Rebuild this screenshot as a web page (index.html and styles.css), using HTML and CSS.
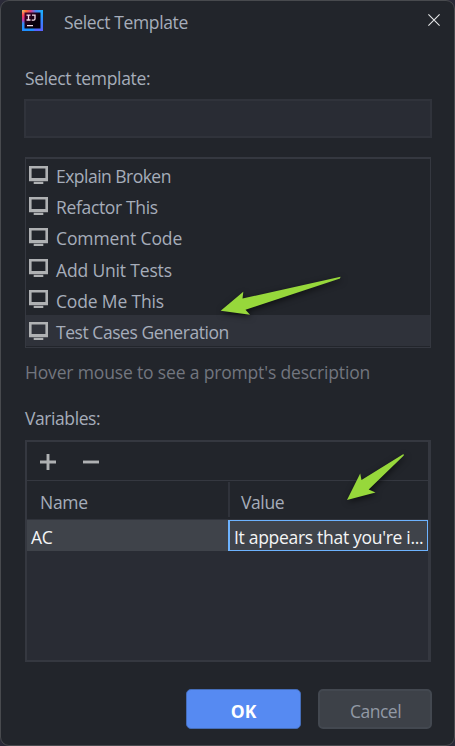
FILE: index.html
```html
<!DOCTYPE html>
<html lang="en">
<head>
<meta charset="utf-8">
<title>Select Template</title>
<link rel="stylesheet" href="styles.css">
</head>
<body>
<svg class="defs" width="0" height="0" aria-hidden="true">
  <symbol id="monitor" viewBox="0 0 19 18">
    <path fill="#afb1b3" fill-rule="evenodd" d="M0 0h19v15.200H0zM2.600 2.600v9.400h13.800V2.600z"/>
    <path fill="#afb1b3" d="M4.700 15.800h9.600V18H4.700z"/>
  </symbol>
</svg>
<main class="dialog">
  <header class="titlebar">
    <svg class="logo" viewBox="0 0 21 21">
      <defs>
        <linearGradient id="top" x1="0" y1="0" x2="1" y2="0">
          <stop offset="0" stop-color="#ffc060"/><stop offset=".2" stop-color="#ff6a30"/>
          <stop offset=".42" stop-color="#d0408a"/><stop offset=".65" stop-color="#4a80f0"/><stop offset="1" stop-color="#18b4ff"/>
        </linearGradient>
        <linearGradient id="left" x1="0" y1="0" x2="0" y2="1">
          <stop offset="0" stop-color="#ffc060"/><stop offset=".25" stop-color="#ff4050"/>
          <stop offset=".48" stop-color="#c03aa8"/><stop offset=".65" stop-color="#2f8bf5"/><stop offset="1" stop-color="#1e90ff"/>
        </linearGradient>
        <linearGradient id="side" x1="0" y1="0" x2="0" y2="1">
          <stop offset="0" stop-color="#18b4ff"/><stop offset=".6" stop-color="#3a80ff"/><stop offset="1" stop-color="#5a62ff"/>
        </linearGradient>
        <linearGradient id="k" x1="0" y1="0" x2="1" y2="1">
          <stop offset="0" stop-color="#4a0030"/><stop offset=".6" stop-color="#08000c"/>
        </linearGradient>
      </defs>
      <path fill="url(#side)" d="M0 0h21v21H0z"/>
      <path fill="url(#top)" d="M0 0h21l-3 3H3z"/>
      <path fill="url(#left)" d="M0 0l3 3v15l-3 3z"/>
      <path fill="#1e90ff" d="M0 21l3-3h9v3z"/>
      <path fill="url(#k)" d="M2.500 2.500h16v16h-16z"/>
      <path fill="none" stroke="#f3dcea" stroke-width="1.300" d="M4.500 5.100h4M6.500 5v5M4.500 10h4M10 5.100h3v3.700q0 1.300-1.300 1.300H9.700M5 15.700h6"/>
    </svg>
    <h1 class="title">Select Template</h1>
    <svg class="close" viewBox="0 0 12 12"><path d="M.4.400l11.200 11.200M11.600.400L.4 11.600"/></svg>
  </header>
  <label class="label search-label" for="q">Select template:</label>
  <input class="search" id="q">
  <ul class="list">
    <li><svg class="mon"><use href="#monitor"/></svg><span class="t1">Explain Broken</span></li>
    <li><svg class="mon"><use href="#monitor"/></svg><span class="t2">Refactor This</span></li>
    <li><svg class="mon"><use href="#monitor"/></svg><span class="t3">Comment Code</span></li>
    <li><svg class="mon"><use href="#monitor"/></svg><span class="t4">Add Unit Tests</span></li>
    <li><svg class="mon"><use href="#monitor"/></svg><span class="t5">Code Me This</span></li>
    <li class="selected"><svg class="mon"><use href="#monitor"/></svg><span class="t6">Test Cases Generation</span></li>
  </ul>
  <p class="hint">Hover mouse to see a prompt's description</p>
  <div class="label vars-label">Variables:</div>
  <section class="panel">
    <div class="tools">
      <svg viewBox="0 0 16 16"><path d="M0 8h16M8 0v16"/></svg>
      <svg viewBox="0 0 16 16"><path d="M0 8h16"/></svg>
    </div>
    <div class="head"><div class="name">Name</div><div class="value">Value</div></div>
    <div class="row"><div class="cell">AC</div><div class="cell active">It appears that you're i...</div></div>
  </section>
  <footer class="actions"><button class="ok">OK</button><button class="cancel">Cancel</button></footer>
  <svg class="arrows" viewBox="0 0 455 746">
    <path d="M340.500 276.800L242.500 298.600l.800-6.800-22.600 19 29.300 4-4.500-5L340 278.600z"/>
    <path d="M403.500 454L361.500 480l-1.300-6.500L347 500l28.500-7.500-6.800-3L403.800 455.500z"/>
  </svg>
</main>
</body>
</html>
```
FILE: styles.css
```css
* { box-sizing: border-box; margin: 0; padding: 0; }
html { background: #2a2a38; }
body, input, button { font: 17.500px/24px "Open Sans", "Noto Sans", sans-serif; color: #a6adba; }
.defs { position: absolute; }
.dialog { width: 455px; height: 746px; border: 1px solid #484a4e; border-radius: 9px; background: #22252b; padding: 0 22px 0 23px; display: flex; flex-direction: column; position: relative; overflow: hidden; white-space: nowrap; }
.titlebar { height: 65px; display: flex; align-items: flex-start; margin: 0 -9px 0 -2px; }
.logo { width: 21px; height: 21px; margin-top: 9px; }
.title { font-size: inherit; font-weight: 400; margin: 9px 0 0 21px; flex: 1; letter-spacing: -.37px; }
.close { width: 12px; height: 12px; margin-top: 13px; margin-right: 1px; fill: none; stroke: #e5e7e8; stroke-width: 1.100; }
.label { padding-left: 1px; letter-spacing: -.34px; }
.search-label { height: 33px; }
.search { width: 408px; height: 39px; border: 2px solid #30333b; background: #292c34; outline: none; padding: 0 8px; }
.list { list-style: none; width: 406px; height: 191px; margin: 19px 0 0 1px; border: 1px solid #353840; border-top-width: 2px; }
.list li { height: 31.200px; display: flex; align-items: flex-start; padding: 5px 0 0 3px; letter-spacing: -.3px; }
.list span { margin-left: 8px; }
.list .t1 { letter-spacing: -.52px; }
.list .t2 { letter-spacing: -.34px; }
.list .t3 { letter-spacing: -.1px; }
.list .t4 { letter-spacing: -.16px; }
.list .t5 { letter-spacing: -.16px; }
.list .t6 { letter-spacing: -.45px; }
.mon { width: 19px; height: 18px; margin-top: 1.600px; }
.selected { background: #2f323a; }
.hint { color: #72767f; margin: 12px 0 0 1px; letter-spacing: -.16px; }
.vars-label { margin-top: 22px; height: 34px; letter-spacing: -.42px; }
.panel { width: 406px; height: 222px; margin-left: 1px; border: 2px solid #353840; border-right-width: 3px; background: #292c34; }
.tools { height: 39px; background: #22252b; border-bottom: 1px solid #353840; display: flex; gap: 27px; padding: 11.500px 0 0 13.400px; }
.tools svg { width: 16px; height: 16px; stroke: #afb1b3; stroke-width: 2.900; }
.head { height: 39px; background: #22252b; border-bottom: 1px solid #30333b; display: flex; padding-top: 1px; }
.name { width: 201px; padding: 8px 0 0 13px; letter-spacing: -.3px; }
.value { height: 35px; border-left: 2px solid #30333b; padding: 8px 0 0 11px; letter-spacing: -.4px; }
.row { height: 31px; display: flex; background: #3f434a; color: #f4f5f6; }
.cell { width: 201px; padding: 5px 0 0 4px; letter-spacing: -.3px; }
.active { width: 200px; border: 1px solid #6db3ff; border-left-width: 2px; padding-top: 4px; }
.actions { display: flex; gap: 17px; margin: 27px 0 0 162px; }
.actions button { width: 115px; height: 40px; border-radius: 5px; padding-top: 4px; }
.ok { background: #568af2; border: 1px solid #456db8; color: #fff; font-weight: 700; }
.cancel { background: #3d4148; border: 1px solid #464c54; color: #9299a5; }
.actions .cancel { width: 114px; border-width: 2px; border-color: #434850; padding: 3px 0 0 1px; letter-spacing: -.5px; }
.arrows { position: absolute; left: -1px; top: -1px; width: 455px; height: 746px; fill: #97d83b; filter: drop-shadow(1px 2px 3px #0009); pointer-events: none; }
```
